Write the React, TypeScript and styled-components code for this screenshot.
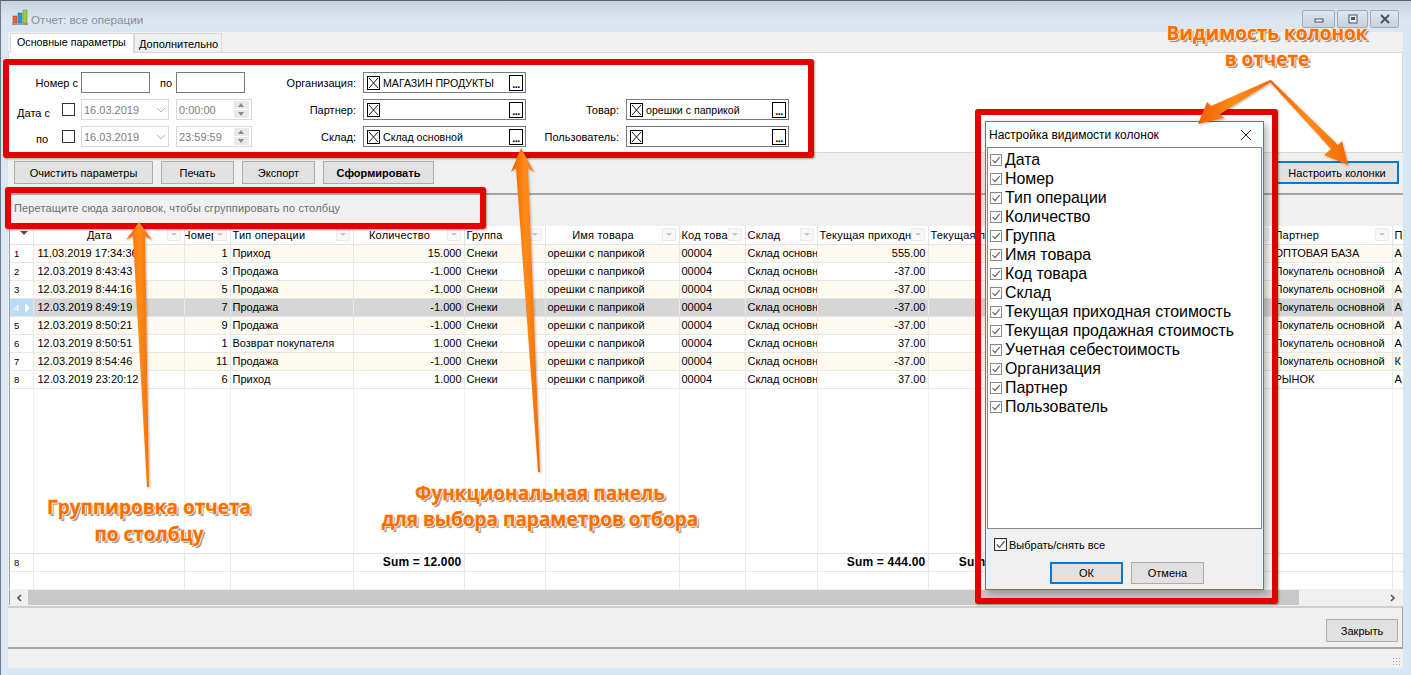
import React from "react";
import styled, { createGlobalStyle } from "styled-components";

const GlobalStyle = createGlobalStyle`
    html, body {
        margin: 0;
        padding: 0;
        background: #d9e6f3;
    }
    * {
        box-sizing: border-box;
    }
`;

const UI_FONT = `"Liberation Sans", Arial, sans-serif`;

const Page = styled.div`
    position: relative;
    width: 1411px;
    height: 675px;
    overflow: hidden;
    display: flex;
    flex-direction: column;
    background: #d9e6f3;
    border-top: 1px solid #5a5f66;
    border-left: 1px solid #6d7a88;
    font-family: ${UI_FONT};
    font-size: 11px;
    color: #000;
`;

const TitleBar = styled.div`
    height: 31px;
    display: flex;
    align-items: center;
    padding: 0 12px 0 11px;
    background: linear-gradient(#c6d3df, #dbe6f1 60%, #d9e6f3);
    flex-shrink: 0;
`;

const TitleText = styled.span`
    margin: 6px 0 0 3px;
    color: #8b8f94;
    font-size: 11.7px;
`;

const WindowButtons = styled.div`
    margin-left: auto;
    display: flex;
    gap: 2px;
    margin-top: 4px;
`;

const WindowButton = styled.div<{ $w: number }>`
    width: ${(p) => p.$w}px;
    height: 18px;
    display: flex;
    align-items: center;
    justify-content: center;
    border: 1px solid #a3acb6;
    background: linear-gradient(#dde6ee, #c6d1dc);
    border-radius: 2px;
`;

const Body = styled.div`
    flex: 1;
    margin: 0 8px 7px 7px;
    display: flex;
    flex-direction: column;
    background: #f0f0f0;
    min-height: 0;
`;

const Tabs = styled.div`
    height: 20px;
    display: flex;
    align-items: flex-end;
    padding-left: 2px;
    flex-shrink: 0;
`;

const Tab = styled.div<{ $active?: boolean }>`
    width: ${(p) => (p.$active ? 124 : 88)}px;
    height: ${(p) => (p.$active ? 20 : 19)}px;
    padding: ${(p) => (p.$active ? "2px 0 0 6px" : "4px 0 0 4px")};
    font-size: ${(p) => (p.$active ? "10.7px" : "11px")};
    background: ${(p) => (p.$active ? "#fff" : "#f0f0f0")};
    border: 1px solid #d9d9d9;
    border-bottom: none;
    position: relative;
    z-index: 1;
    margin-bottom: ${(p) => (p.$active ? "-1px" : "0")};
`;

const FilterPanel = styled.div`
    height: 101px;
    flex-shrink: 0;
    display: flex;
    background: #fff;
    border: 1px solid #d9d9d9;
    padding: 19px 0 0 0;
`;

const FieldColumn = styled.div<{ $w: number }>`
    width: ${(p) => p.$w}px;
    display: flex;
    flex-direction: column;
    gap: 6px;
`;

const FormRow = styled.div`
    height: 21px;
    display: flex;
    align-items: center;
`;

const FieldLabel = styled.div<{ $w: number; $pad?: number; $drop?: number }>`
    width: ${(p) => p.$w}px;
    padding-right: ${(p) => p.$pad ?? 0}px;
    padding-top: ${(p) => p.$drop ?? 0}px;
    text-align: right;
    white-space: nowrap;
    flex-shrink: 0;
`;

const TextBox = styled.div`
    width: 69px;
    height: 21px;
    border: 1px solid #7a7a7a;
    background: #fff;
`;

const TickBox = styled.div<{ $left: number }>`
    width: 13px;
    height: 13px;
    margin: 0 6px 0 ${(p) => p.$left}px;
    border: 1px solid #333;
    background: #fff;
    flex-shrink: 0;
`;

const DisabledBox = styled.div<{ $w: number; $gap?: number }>`
    width: ${(p) => p.$w}px;
    height: 21px;
    margin-left: ${(p) => p.$gap ?? 0}px;
    display: flex;
    align-items: center;
    justify-content: space-between;
    padding: 0 2px;
    border: 1px solid #d9d9d9;
    color: #7d7d7d;
    background: #fff;
`;

const Spinner = styled.div`
    width: 15px;
    height: 17px;
    display: flex;
    flex-direction: column;
    gap: 1px;
`;

const SpinPart = styled.div<{ $up?: boolean }>`
    flex: 1;
    background: #e9e9e9;
    position: relative;
    &::after {
        content: "";
        position: absolute;
        left: 4px;
        top: 2px;
        border-left: 3px solid transparent;
        border-right: 3px solid transparent;
        ${(p) => (p.$up ? "border-bottom: 4px solid #8c8c8c;" : "border-top: 4px solid #8c8c8c;")}
    }
`;

const LookupField = styled.div`
    width: 163px;
    height: 21px;
    margin-left: 7px;
    display: flex;
    align-items: center;
    padding: 0 2px 0 3px;
    border: 1px solid #7a7a7a;
    background: #fff;
`;

const ClearBox = styled.div`
    width: 13px;
    height: 14px;
    border: 1px solid #000;
    display: flex;
    flex-shrink: 0;
`;

const LookupText = styled.span`
    margin-left: 3px;
    flex: 1;
    font-size: 10.6px;
    white-space: nowrap;
    overflow: hidden;
`;

const DotsButton = styled.div`
    width: 14px;
    height: 16px;
    border: 1px solid #000;
    font-weight: bold;
    font-size: 11px;
    line-height: 17px;
    text-align: center;
    letter-spacing: -0.5px;
    flex-shrink: 0;
`;

const Toolbar = styled.div`
    height: 42px;
    flex-shrink: 0;
    display: flex;
    gap: 8px;
    padding: 8px 4px 0 6px;
    border-bottom: 2px solid #a6a6a6;
`;

const Button = styled.div<{ $w: number; $h?: number; $bold?: boolean; $focus?: boolean; $push?: boolean }>`
    width: ${(p) => p.$w}px;
    height: ${(p) => p.$h ?? 23}px;
    display: flex;
    align-items: center;
    justify-content: center;
    background: #e1e1e1;
    border: ${(p) => (p.$focus ? "2px solid #0078d7" : "1px solid #adadad")};
    font-weight: ${(p) => (p.$bold ? "bold" : "normal")};
    margin-left: ${(p) => (p.$push ? "auto" : "0")};
    white-space: nowrap;
`;

const GroupPanel = styled.div`
    height: 31px;
    flex-shrink: 0;
    padding: 7px 0 0 6px;
    color: #6d6d6d;
    letter-spacing: 0.14px;
`;

const GridWrap = styled.div`
    margin-left: 1px;
    width: 1394px;
    height: 363px;
    flex-shrink: 0;
    border-left: 1px solid #a0a0a0;
    background: #fff;
    overflow: hidden;
`;

const GridTable = styled.table`
    width: 1393px;
    table-layout: fixed;
    border-collapse: collapse;
`;

const HeadCell = styled.th<{ $align?: string; $indent?: number }>`
    height: 18px;
    padding: 0 ${(p) => (p.$align === "center" ? 20 : 2)}px 0 2px;
    position: relative;
    font-weight: normal;
    letter-spacing: 0.2px;
    text-align: ${(p) => p.$align ?? "left"};
    text-indent: ${(p) => p.$indent ?? 0}px;
    white-space: nowrap;
    overflow: hidden;
    background: #fff;
    border-right: 1px solid #e4e4e4;
    border-bottom: 1px solid #e4e4e4;
`;

const FilterGlyph = styled.span`
    position: absolute;
    right: 3px;
    top: 2px;
    width: 14px;
    height: 13px;
    background: #f7f7f7;
    border: 1px solid #ececec;
    &::after {
        content: "";
        position: absolute;
        left: 3px;
        top: 4px;
        border-left: 3px solid transparent;
        border-right: 3px solid transparent;
        border-top: 3px solid #c8c8c8;
    }
`;

const CornerGlyph = styled.span`
    position: absolute;
    right: 5px;
    top: 5px;
    border-left: 4px solid transparent;
    border-right: 4px solid transparent;
    border-top: 4px solid #555;
`;

const Row = styled.tr<{ $tint?: string }>`
    height: 18px;
    background: ${(p) => p.$tint ?? "#fff"};
`;

const Cell = styled.td<{ $right?: boolean; $bold?: boolean; $pad?: number }>`
    height: 18px;
    padding: 0 2px 0 ${(p) => p.$pad ?? 2}px;
    text-align: ${(p) => (p.$right ? "right" : "left")};
    font-weight: ${(p) => (p.$bold ? "bold" : "normal")};
    font-size: ${(p) => (p.$bold ? "12px" : "11px")};
    letter-spacing: ${(p) => (p.$bold ? "0.2px" : "0")};
    white-space: nowrap;
    overflow: hidden;
    border-right: 1px solid #e8e8e8;
    border-bottom: 1px solid #e8e8e8;
`;

const IndicatorCell = styled(Cell)<{ $current?: boolean }>`
    padding: 0 0 0 4px;
    font-size: 9.5px;
    background: ${(p) => (p.$current ? "#bcdcf4" : "#fff")};
    color: ${(p) => (p.$current ? "#fff" : "#000")};
    position: relative;
`;

const CurrentMark = styled.span`
    position: absolute;
    right: 3px;
    top: 4px;
    border-top: 5px solid transparent;
    border-bottom: 5px solid transparent;
    border-left: 5px solid #fff;
`;

const SpacerCell = styled.td`
    height: 165px;
    border-right: 1px solid #f2f2f2;
    border-bottom: 1px solid #e4e4e4;
`;

const ScrollBar = styled.div`
    margin: 1px 0 0 1px;
    width: 1394px;
    height: 15px;
    flex-shrink: 0;
    display: flex;
    align-items: center;
    background: #f0f0f0;
    border-left: 1px solid #a0a0a0;
`;

const ScrollArrow = styled.div<{ $w: number }>`
    width: ${(p) => p.$w}px;
    height: 15px;
    display: flex;
    align-items: center;
    justify-content: center;
    flex-shrink: 0;
`;

const ScrollThumb = styled.div`
    width: 1271px;
    height: 15px;
    background: #c9c9c9;
`;

const ScrollTrack = styled.div`
    flex: 1;
`;

const FooterBar = styled.div`
    margin-top: 1px;
    height: 43px;
    flex-shrink: 0;
    display: flex;
    justify-content: flex-end;
    padding: 11px 4px 0 0;
    border-top: 2px solid #cfcfcf;
    border-bottom: 2px solid #a6a6a6;
    border-right: 1px solid #a6a6a6;
`;

const StatusBar = styled.div`
    flex: 1;
    display: flex;
    justify-content: flex-end;
    align-items: flex-end;
    padding: 0 2px 2px 0;
`;

const Grip = styled.div`
    width: 9px;
    height: 9px;
    background-image: radial-gradient(#a8a8a8 1px, transparent 1px);
    background-size: 3px 3px;
`;

const RedFrame = styled.div<{ $x: number; $y: number; $w: number; $h: number }>`
    position: absolute;
    left: ${(p) => p.$x}px;
    top: ${(p) => p.$y}px;
    width: ${(p) => p.$w}px;
    height: ${(p) => p.$h}px;
    border: 6px solid #e60000;
    border-radius: 3px;
    box-shadow: 1px 1px 2px rgba(0, 0, 0, 0.35);
`;

const Dialog = styled.div`
    position: absolute;
    left: 984px;
    top: 120px;
    width: 279px;
    height: 469px;
    display: flex;
    flex-direction: column;
    background: #f0f0f0;
    border: 1px solid #2f86cc;
    box-shadow: 3px 3px 8px rgba(0, 0, 0, 0.3);
`;

const DialogHead = styled.div`
    height: 25px;
    display: flex;
    align-items: center;
    justify-content: space-between;
    padding: 0 11px 0 3px;
    font-size: 12px;
    background: #fff;
    flex-shrink: 0;
`;

const ColumnList = styled.div`
    height: 382px;
    margin: 0 1px;
    padding-top: 2px;
    background: #fff;
    border: 1px solid #828790;
    flex-shrink: 0;
`;

const ColumnItem = styled.div`
    height: 19px;
    display: flex;
    align-items: center;
    padding-left: 2px;
    font-size: 15.9px;
    white-space: nowrap;
`;

const ColumnText = styled.span`
    margin-left: 3px;
`;

const SelectAll = styled.div`
    display: flex;
    align-items: center;
    gap: 2px;
    padding: 9px 0 0 8px;
`;

const DialogActions = styled.div`
    display: flex;
    gap: 8px;
    padding: 11px 0 0 64px;
`;

const Callout = styled.div<{ $cx: number; $y: number; $lh: number }>`
    position: absolute;
    left: ${(p) => p.$cx}px;
    top: ${(p) => p.$y}px;
    transform: translateX(-50%);
    font-family: "Open Sans", sans-serif;
    font-size: 19px;
    font-weight: 700;
    line-height: ${(p) => p.$lh}px;
    text-align: center;
    white-space: nowrap;
    color: #f97000;
    -webkit-text-stroke: 0.3px #f97000;
    text-shadow: -1px 0 0 #fff, 1px 0 0 #fff, 0 -1px 0 #fff, 0 1px 0 #fff, 2px 2px 1px #8f8f8f;
`;

const ArrowLayer = styled.svg`
    position: absolute;
    left: -1px;
    top: -1px;
    pointer-events: none;
`;

const XMark = () => (
    <svg width="11" height="12" viewBox="0 0 11 12">
        <path d="M1 1 L10 11 M10 1 L1 11" stroke="#000" strokeWidth="0.9" fill="none" />
    </svg>
);

const CheckMark = ({ size = 12, edge = "#8a8a8a" }: { size?: number; edge?: string }) => (
    <svg width={size} height={size} viewBox="0 0 12 12" style={{ flexShrink: 0 }}>
        <rect x="0.5" y="0.5" width="11" height="11" fill="#fff" stroke={edge} />
        <path d="M2.5 6 L5 8.7 L9.7 3" stroke="#555" strokeWidth="1.1" fill="none" />
    </svg>
);

const ChartIcon = () => (
    <svg width="16" height="16" viewBox="0 0 16 16">
        <rect x="1" y="7" width="4" height="7" fill="#e8642b" stroke="#a5401a" strokeWidth="0.5" />
        <rect x="6" y="4" width="4" height="10" fill="#3d8fdc" stroke="#1f5f9e" strokeWidth="0.5" />
        <rect x="11" y="1" width="4" height="13" fill="#9bd22f" stroke="#5f8f16" strokeWidth="0.5" />
        <rect x="0" y="14" width="16" height="2" fill="#9a9a9a" />
    </svg>
);

const COLUMNS = [23, 151, 46, 123, 111, 81, 134, 66, 72, 111, 112, 110, 122, 120, 11];

const HEADERS: { title: string; align?: string; filter?: boolean; indent?: number }[] = [
    { title: "Дата", align: "center", filter: true },
    { title: "Номер", filter: true, indent: -4 },
    { title: "Тип операции", filter: true },
    { title: "Количество", align: "center", filter: true },
    { title: "Группа", filter: true },
    { title: "Имя товара", align: "center", filter: true },
    { title: "Код товара", filter: true },
    { title: "Склад", filter: true },
    { title: "Текущая приходная", filter: true },
    { title: "Текущая продажная", filter: true },
    { title: "Учетная", filter: true },
    { title: "Организация", filter: true },
    { title: "Партнер", filter: true },
    { title: "П" },
];

const ROWS = [
    ["11.03.2019 17:34:36", "1", "Приход", "15.000", "555.00", "ОПТОВАЯ БАЗА", "А"],
    ["12.03.2019 8:43:43", "3", "Продажа", "-1.000", "-37.00", "Покупатель основной", "А"],
    ["12.03.2019 8:44:16", "5", "Продажа", "-1.000", "-37.00", "Покупатель основной", "А"],
    ["12.03.2019 8:49:19", "7", "Продажа", "-1.000", "-37.00", "Покупатель основной", "А"],
    ["12.03.2019 8:50:21", "9", "Продажа", "-1.000", "-37.00", "Покупатель основной", "А"],
    ["12.03.2019 8:50:51", "1", "Возврат покупателя", "1.000", "37.00", "Покупатель основной", "А"],
    ["12.03.2019 8:54:46", "11", "Продажа", "-1.000", "-37.00", "Покупатель основной", "К"],
    ["12.03.2019 23:20:12", "6", "Приход", "1.000", "37.00", "РЫНОК", "А"],
];

const VISIBLE_COLUMNS = [
    "Дата",
    "Номер",
    "Тип операции",
    "Количество",
    "Группа",
    "Имя товара",
    "Код товара",
    "Склад",
    "Текущая приходная стоимость",
    "Текущая продажная стоимость",
    "Учетная себестоимость",
    "Организация",
    "Партнер",
    "Пользователь",
];

const rowTint = (index: number) => {
    if (index === 3) return "#d6d6d6";
    return index % 2 === 0 ? "#fffaf0" : "#fff";
};

const Lookup: React.FC<{ label: string; labelWidth: number; value?: string }> = ({ label, labelWidth, value }) => (
    <FormRow>
        <FieldLabel $w={labelWidth}>{label}</FieldLabel>
        <LookupField>
            <ClearBox>
                <XMark />
            </ClearBox>
            <LookupText>{value}</LookupText>
            <DotsButton>...</DotsButton>
        </LookupField>
    </FormRow>
);

const DateRange: React.FC<{ label: string; labelWidth: number; left: number; date: string; time: string }> = ({
    label,
    labelWidth,
    left,
    date,
    time,
}) => (
    <FormRow>
        <FieldLabel $w={labelWidth} $drop={label === "по" ? 4 : 6}>
            {label}
        </FieldLabel>
        <TickBox $left={left} />
        <DisabledBox $w={88}>
            {date}
            <svg width="10" height="6" viewBox="0 0 10 6">
                <path d="M1 1 L5 5 L9 1" stroke="#b5b5b5" fill="none" />
            </svg>
        </DisabledBox>
        <DisabledBox $w={76} $gap={7}>
            {time}
            <Spinner>
                <SpinPart $up />
                <SpinPart />
            </Spinner>
        </DisabledBox>
    </FormRow>
);

export default function App() {
    return (
        <Page>
            <GlobalStyle />
            <TitleBar>
                <ChartIcon />
                <TitleText>Отчет: все операции</TitleText>
                <WindowButtons>
                    <WindowButton $w={33}>
                        <svg width="10" height="8" viewBox="0 0 10 8">
                            <rect x="1" y="4" width="8" height="3" fill="#eef2f6" stroke="#4a5560" />
                        </svg>
                    </WindowButton>
                    <WindowButton $w={31}>
                        <svg width="10" height="10" viewBox="0 0 10 10">
                            <rect x="1" y="1" width="8" height="8" fill="#eef2f6" stroke="#4a5560" />
                            <rect x="3" y="3" width="4" height="3" fill="#4a5560" />
                        </svg>
                    </WindowButton>
                    <WindowButton $w={29}>
                        <svg width="12" height="10" viewBox="0 0 12 10">
                            <path d="M2 1 L10 9 M10 1 L2 9" stroke="#4a5560" strokeWidth="2" />
                        </svg>
                    </WindowButton>
                </WindowButtons>
            </TitleBar>
            <Body>
                <Tabs>
                    <Tab $active>Основные параметры</Tab>
                    <Tab>Дополнительно</Tab>
                </Tabs>
                <FilterPanel>
                    <FieldColumn $w={261}>
                        <FormRow>
                            <FieldLabel $w={72} $pad={3}>
                                Номер с
                            </FieldLabel>
                            <TextBox />
                            <FieldLabel $w={26} $pad={4}>
                                по
                            </FieldLabel>
                            <TextBox />
                        </FormRow>
                        <DateRange label="Дата с" labelWidth={41} left={12} date="16.03.2019" time="0:00:00" />
                        <DateRange label="по" labelWidth={39} left={14} date="16.03.2019" time="23:59:59" />
                    </FieldColumn>
                    <FieldColumn $w={256}>
                        <Lookup label="Организация:" labelWidth={86} value="МАГАЗИН ПРОДУКТЫ" />
                        <Lookup label="Партнер:" labelWidth={86} />
                        <Lookup label="Склад:" labelWidth={86} value="Склад основной" />
                    </FieldColumn>
                    <FieldColumn $w={264}>
                        <FormRow />
                        <Lookup label="Товар:" labelWidth={93} value="орешки с паприкой" />
                        <Lookup label="Пользователь:" labelWidth={93} />
                    </FieldColumn>
                </FilterPanel>
                <Toolbar>
                    <Button $w={139}>Очистить параметры</Button>
                    <Button $w={73}>Печать</Button>
                    <Button $w={73}>Экспорт</Button>
                    <Button $w={111} $bold>
                        Сформировать
                    </Button>
                    <Button $w={124} $focus $push>
                        Настроить колонки
                    </Button>
                </Toolbar>
                <GroupPanel>Перетащите сюда заголовок, чтобы сгруппировать по столбцу</GroupPanel>
                <GridWrap>
                    <GridTable>
                        <colgroup>
                            {COLUMNS.map((w, i) => (
                                <col key={i} width={w} />
                            ))}
                        </colgroup>
                        <thead>
                            <tr>
                                <HeadCell>
                                    <CornerGlyph />
                                </HeadCell>
                                {HEADERS.map((h) => (
                                    <HeadCell key={h.title} $align={h.align} $indent={h.indent}>
                                        {h.title}
                                        {h.filter && <FilterGlyph />}
                                    </HeadCell>
                                ))}
                            </tr>
                        </thead>
                        <tbody>
                            {ROWS.map((r, i) => (
                                <Row key={i} $tint={rowTint(i)}>
                                    <IndicatorCell $current={i === 3}>
                                        {i + 1}
                                        {i === 3 && <CurrentMark />}
                                    </IndicatorCell>
                                    <Cell $pad={4}>{r[0]}</Cell>
                                    <Cell $right>{r[1]}</Cell>
                                    <Cell>{r[2]}</Cell>
                                    <Cell $right>{r[3]}</Cell>
                                    <Cell>Снеки</Cell>
                                    <Cell>орешки с паприкой</Cell>
                                    <Cell>00004</Cell>
                                    <Cell>Склад основной</Cell>
                                    <Cell $right>{r[4]}</Cell>
                                    <Cell />
                                    <Cell />
                                    <Cell />
                                    <Cell>{r[5]}</Cell>
                                    <Cell>{r[6]}</Cell>
                                </Row>
                            ))}
                            <tr>
                                {COLUMNS.map((_, i) => (
                                    <SpacerCell key={i} />
                                ))}
                            </tr>
                            <Row>
                                <IndicatorCell>8</IndicatorCell>
                                <Cell />
                                <Cell />
                                <Cell />
                                <Cell $right $bold>
                                    Sum = 12.000
                                </Cell>
                                <Cell />
                                <Cell />
                                <Cell />
                                <Cell />
                                <Cell $right $bold>
                                    Sum = 444.00
                                </Cell>
                                <Cell $right $bold>
                                    Sum = 444.00
                                </Cell>
                                <Cell />
                                <Cell />
                                <Cell />
                                <Cell />
                            </Row>
                            <Row>
                                {COLUMNS.map((_, i) => (
                                    <Cell key={i} />
                                ))}
                            </Row>
                        </tbody>
                    </GridTable>
                </GridWrap>
                <ScrollBar>
                    <ScrollArrow $w={18}>
                        <svg width="6" height="8" viewBox="0 0 6 8">
                            <path d="M5 1 L2 4 L5 7" stroke="#555" strokeWidth="1.6" fill="none" />
                        </svg>
                    </ScrollArrow>
                    <ScrollThumb />
                    <ScrollTrack />
                    <ScrollArrow $w={20}>
                        <svg width="6" height="8" viewBox="0 0 6 8">
                            <path d="M1 1 L4 4 L1 7" stroke="#555" strokeWidth="1.6" fill="none" />
                        </svg>
                    </ScrollArrow>
                </ScrollBar>
                <FooterBar>
                    <Button $w={72}>Закрыть</Button>
                </FooterBar>
                <StatusBar>
                    <Grip />
                </StatusBar>
            </Body>

            <RedFrame $x={2} $y={58} $w={811} $h={99} />
            <RedFrame $x={4} $y={186} $w={481} $h={42} />
            <RedFrame $x={974} $y={108} $w={303} $h={495} />

            <Dialog>
                <DialogHead>
                    Настройка видимости колонок
                    <svg width="12" height="12" viewBox="0 0 12 12">
                        <path d="M1 1 L11 11 M11 1 L1 11" stroke="#222" strokeWidth="1" fill="none" />
                    </svg>
                </DialogHead>
                <ColumnList>
                    {VISIBLE_COLUMNS.map((name) => (
                        <ColumnItem key={name}>
                            <CheckMark />
                            <ColumnText>{name}</ColumnText>
                        </ColumnItem>
                    ))}
                </ColumnList>
                <SelectAll>
                    <CheckMark size={13} edge="#333" />
                    Выбрать/снять все
                </SelectAll>
                <DialogActions>
                    <Button $w={73} $h={22} $focus>
                        ОК
                    </Button>
                    <Button $w={73} $h={22}>
                        Отмена
                    </Button>
                </DialogActions>
            </Dialog>

            <ArrowLayer width="1411" height="675" viewBox="0 0 1411 675">
                <defs>
                    <linearGradient id="arrowFill" x1="0" y1="0" x2="1" y2="0">
                        <stop offset="0" stopColor="#f06000" />
                        <stop offset="0.5" stopColor="#ff8c1a" />
                        <stop offset="1" stopColor="#f56a00" />
                    </linearGradient>
                    <filter id="arrowShadow" x="-20%" y="-20%" width="140%" height="140%">
                        <feDropShadow dx="1" dy="1" stdDeviation="1" floodColor="#000" floodOpacity="0.3" />
                    </filter>
                </defs>
                <g fill="url(#arrowFill)" filter="url(#arrowShadow)">
                    <polygon points="139,222 152,240 145,236 149,487 147,487 133,236 126,240" />
                    <polygon points="521,148 534,172 528,168 540,472 538,472 516,168 511,172" />
                    <polygon points="1198,124 1207,102 1211,106 1270,80 1271,82 1220,114 1224,118" />
                    <polygon points="1348,165 1324,155 1331,149 1269,81 1271,80 1338,145 1342,141" />
                </g>
            </ArrowLayer>

            <Callout $cx={1266} $y={19} $lh={26}>
                Видимость колонок
                <br />в отчете
            </Callout>
            <Callout $cx={148} $y={493} $lh={27}>
                Группировка отчета
                <br />
                по столбцу
            </Callout>
            <Callout $cx={539} $y={479} $lh={26}>
                Функциональная панель
                <br />
                для выбора параметров отбора
            </Callout>
        </Page>
    );
}
